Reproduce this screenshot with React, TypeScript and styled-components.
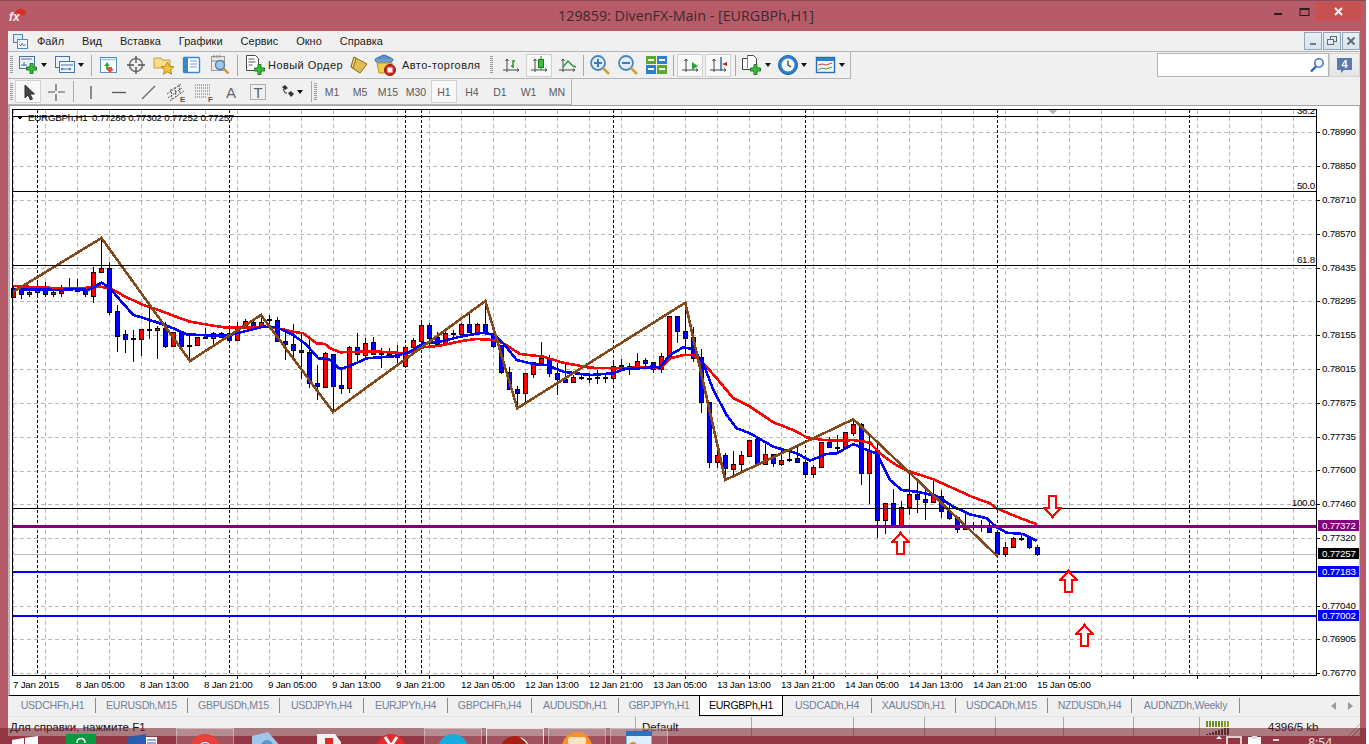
import React from 'react';
import styled, { createGlobalStyle } from 'styled-components';

const Global = createGlobalStyle`
  html, body { margin: 0; padding: 0; background: #fff; overflow: hidden; }
  #root { width: 1369px; height: 744px; }
`;

const FONT = '"Liberation Sans", Arial, sans-serif';
const ROSE = '#b85b68';

const Root = styled.div`
  position: relative; width: 1366px; height: 744px; background: ${ROSE};
  overflow: hidden; font-family: ${FONT}; display: flex; flex-direction: column;
`;
const TitleBar = styled.div`
  height: 31px; box-sizing: border-box; border-top: 1px solid #8f4853;
  display: flex; align-items: flex-start; padding-left: 9px; position: relative; flex: none;
`;
const Logo = styled.div` width: 18px; height: 16px; margin-top: 6px; `;
const Title = styled.div`
  flex: 1; text-align: center; font-family: "Open Sans", sans-serif; font-size: 14.3px; line-height: 29px;
  color: #3b2a2e; padding-left: 82px; margin-right: 4px;
`;
const WinControls = styled.div` display: flex; width: 94px; height: 20px; margin: 1px 5px 0 0; flex: none; align-items: flex-start; `;
const WinBtn = styled.div` width: 25px; height: 20px; display: flex; align-items: center; justify-content: center; `;
const CloseBtn = styled.div`
  width: 45px; height: 19px; margin-left: 0; background: #c75050; display: flex; align-items: center; justify-content: center;
`;
const Frame = styled.div`
  width: 1352px; margin-left: 8px; height: 705px; background: #f0f0f0; display: flex; flex-direction: column; flex: none;
`;
const MenuBar = styled.div`
  height: 21px; box-sizing: border-box; border-bottom: 1px solid #b4b4b4; display: flex; align-items: center;
  padding-left: 5px; flex: none;
`;
const MenuLogo = styled.div` width: 15px; height: 15px; margin-right: 9px; `;
const MenuItem = styled.div` font-size: 11px; color: #1c1c1c; margin-right: 18px; `;
const MdiGroup = styled.div` margin-left: auto; display: flex; gap: 1px; `;
const MdiBtn = styled.div`
  width: 18px; height: 18px; box-sizing: border-box; border: 1px solid #90a6b8;
  background: linear-gradient(#e9eff5, #d7e2ec); display: flex; align-items: center; justify-content: center;
`;
const Row = styled.div<{ $h: number }>` height: ${p => p.$h}px; display: flex; flex: none; `;
const Toolbar = styled.div<{ $w: number }>`
  width: ${p => p.$w}px; box-sizing: border-box; display: flex; align-items: center;
  border-bottom: 1px solid #b4b4b4; border-right: 1px solid #b4b4b4;
`;
const Grip = styled.div<{ $w: number }>`
  width: ${p => p.$w}px; height: 100%; flex: none; position: relative;
  &::before {
    content: ''; position: absolute; left: 2px; top: 4px; bottom: 4px; width: 3px;
    background: repeating-linear-gradient(to bottom, #9a9a9a 0 1px, transparent 1px 2px);
  }
`;
const Sep = styled.div<{ $w: number }>`
  width: ${p => p.$w}px; height: 21px; flex: none; display: flex; justify-content: center;
  &::before { content: ''; width: 1px; background: #a8a8a8; }
`;
const ToolBtn = styled.div<{ $w: number; $active?: boolean }>`
  width: ${p => p.$w - 2}px; margin: 0 1px; height: 23px; box-sizing: border-box; flex: none;
  display: flex; align-items: center; justify-content: center; gap: 2px;
  border: 1px solid ${p => (p.$active ? '#d0d0d0' : 'transparent')};
  background: ${p => (p.$active ? '#f8f8f8' : 'transparent')};
  font-size: 10.5px; color: #5a5a5a;
`;
const LabelBtn = styled.div<{ $w: number; $gap: number; $pad: number }>`
  width: ${p => p.$w}px; height: 23px; box-sizing: border-box; flex: none; padding-left: ${p => p.$pad}px;
  display: flex; align-items: center; gap: ${p => p.$gap}px;
`;
const BtnText = styled.span` font-size: 11px; letter-spacing: 0.45px; color: #222; white-space: nowrap; `;
const Caret = styled.div`
  width: 0; height: 0; border-left: 3.5px solid transparent; border-right: 3.5px solid transparent;
  border-top: 4px solid #111; flex: none;
`;
const SearchGroup = styled.div` margin-left: auto; display: flex; margin-top: 1px; height: 24px; `;
const SearchBox = styled.div`
  width: 172px; box-sizing: border-box; background: #fff; border: 1px solid #b4b4b4; display: flex;
  justify-content: flex-end; align-items: center; padding-right: 3px;
`;
const NoteBtn = styled.div`
  width: 31px; box-sizing: border-box; border: 1px solid #d4d4d4; background: linear-gradient(#f2f2f2, #e4e4e4);
  display: flex; align-items: center; justify-content: center; padding-top: 1px;
`;
const ChartBox = styled.div`
  height: 591px; flex: none; box-sizing: border-box; border-top: 1px solid #a0a0a0; border-left: 2px solid #b8b8b8;
  border-right: 1px solid #b8b8b8; border-bottom: 1px solid #000; background: #fff;
`;
const ChartSvg = styled.svg` display: block; `;
const AxisText = styled.text<{ $fill?: string }>`
  font-family: ${FONT}; font-size: 9.8px; letter-spacing: -0.25px; fill: ${p => p.$fill || '#000'};
`;
const FibText = styled(AxisText)` text-anchor: end; `;
const TabBar = styled.div`
  height: 20px; flex: none; display: flex; align-items: stretch; padding-left: 2px; position: relative; box-sizing: border-box;
`;
const Tab = styled.div<{ $w: number; $active?: boolean; $bare?: boolean }>`
  width: ${p => p.$w}px; flex: none; box-sizing: border-box; text-align: center; font-size: 10.6px; letter-spacing: -0.3px;
  white-space: nowrap; color: ${p => (p.$active ? '#000' : '#75809a')};
  height: ${p => (p.$active ? '20px' : '15px')}; margin-top: ${p => (p.$active ? '0' : '2px')};
  line-height: ${p => (p.$active ? '19px' : '15px')};
  background: ${p => (p.$active ? '#fff' : 'transparent')};
  border-left: ${p => (p.$active ? '1px solid #000' : 'none')};
  border-bottom: ${p => (p.$active ? '1px solid #000' : 'none')};
  border-right: ${p => (p.$active ? '1px solid #000' : p.$bare ? 'none' : '1px solid #8a8a8a')};
`;
const TabArrows = styled.div` margin-left: auto; display: flex; gap: 12px; align-items: center; margin-right: 7px; `;
const TabArrow = styled.div<{ $dir: 'l' | 'r' }>`
  width: 0; height: 0; border-top: 4px solid transparent; border-bottom: 4px solid transparent;
  ${p => (p.$dir === 'l' ? 'border-right: 5px solid #9a9a9a;' : 'border-left: 5px solid #9a9a9a;')}
`;
const StatusBar = styled.div`
  height: 20px; flex: none; display: flex; box-sizing: border-box; border-top: 1px solid #e4e4e4; padding-left: 2px; position: relative;
`;
const StatusCell = styled.div<{ $w: number; $noLine?: boolean; $pad?: number }>`
  width: ${p => p.$w}px; flex: none; box-sizing: border-box; font-size: 11.5px; color: #111; white-space: nowrap;
  padding: 4px 0 0 ${p => p.$pad ?? 6}px;
  border-right: ${p => (p.$noLine ? 'none' : '1px solid #a8a8a8')};
`;
const Resize = styled.div`
  position: absolute; right: 0; bottom: 0; width: 14px; height: 14px;
  background: repeating-linear-gradient(135deg, transparent 0 2px, #b0b0b0 2px 3px);
  clip-path: polygon(100% 0, 100% 100%, 0 100%);
`;
const Taskbar = styled.div`
  position: absolute; left: 0; top: 728px; width: 1366px; height: 16px; background: rgba(114, 25, 36, 0.55);
  display: flex; overflow: hidden;
`;
const TaskSlot = styled.div<{ $w: number; $active?: 0 | 1 | 2 }>`
  width: ${p => p.$w - 4}px; margin: 0 2px; height: 30px; box-sizing: border-box; flex: none; display: flex; justify-content: center;
  border: 1px solid ${p => (p.$active === 2 ? 'rgba(255,255,255,.75)' : p.$active === 1 ? 'rgba(255,255,255,.35)' : 'transparent')};
  background: ${p => (p.$active ? 'rgba(255,255,255,.14)' : 'transparent')};
`;
const TaskIcon = styled.svg<{ $top: number }>` margin-top: ${p => p.$top}px; flex: none; `;
const Tray = styled.div` margin-left: auto; display: flex; align-items: flex-start; padding-top: 8px; `;
const Clock = styled.div`
  font-family: "Open Sans", sans-serif; font-size: 12px; color: #eee; line-height: 12px; margin: 1px 34px 0 19px;
`;

/* ---------- small icons ---------- */
const Svg = styled.svg` display: block; flex: none; `;
const Ic: React.FC<{ children: React.ReactNode; w?: number; h?: number }> = ({ children, w = 22, h = 22 }) => (
  <Svg width={w} height={h} viewBox={`0 0 ${w} ${h}`}>{children}</Svg>
);
const Plus = ({ x, y }: { x: number; y: number }) => (
  <path transform={`translate(${x} ${y})`} d="M4 .5h3v3.5h3.5v3H7v3.5H4V7H.5V4H4z" fill="#3dbb3d" stroke="#1c7d22" />
);
const Axes = () => (
  <path d="M7 5v13M3 16h16M7 5l-1.5 2M7 5l1.5 2M19 16l-2-1.5M19 16l-2 1.5" stroke="#4a4a4a" fill="none" />
);

const IconNewChart = () => (
  <Ic><rect x="2.5" y="2.5" width="15" height="12" fill="#e9f2fb" stroke="#46749f" /><path d="M4 5h11M7 8v4M4 11h6" stroke="#46749f" /><Plus x={9} y={9} /></Ic>
);
const IconProfile = () => (
  <Ic><rect x="1.5" y="2.5" width="14" height="11" fill="#e9f2fb" stroke="#46749f" /><rect x="5.5" y="7.5" width="15" height="11" fill="#eef5fc" stroke="#46749f" /><path d="M7 11h12M9 14l-2 1 2 1M15 14l2 1-2 1M8 15h8" stroke="#46749f" fill="none" /></Ic>
);
const IconMarket = () => (
  <Ic><rect x="2.5" y="3.5" width="16" height="15" fill="#fff" stroke="#5a8fbf" /><rect x="3.5" y="4.5" width="14" height="2" fill="#a9cbe7" /><path d="M6 12l3-4 3 4h-2v3H8v-3z" fill="#32a84a" /><path d="M10 13h4v2h2l-4 4-4-4h2z" fill="#e0573d" /></Ic>
);
const IconCross = () => (
  <Ic><circle cx="11" cy="11" r="6.5" fill="none" stroke="#777" strokeWidth="1.6" /><path d="M11 2v7M11 13v7M2 11h7M13 11h7" stroke="#555" strokeWidth="1.4" /></Ic>
);
const IconFolderStar = () => (
  <Ic><path d="M1 4h7l2 2h7v8H1z" fill="#f7dd8c" stroke="#c79c3a" /><path d="M14.5 8l2 4.3 4.5.5-3.4 3 1 4.5-4.1-2.4-4.1 2.4 1-4.5-3.4-3 4.5-.5z" fill="#f1c232" stroke="#b58a1d" /></Ic>
);
const IconNav = () => (
  <Ic><rect x="2.5" y="3.5" width="16" height="15" rx="1" fill="#fff" stroke="#3c85c8" strokeWidth="1.4" /><rect x="3" y="4" width="4" height="14" fill="#3c85c8" /><path d="M9 7h7M9 10h7M9 13h7" stroke="#6a9fd0" /></Ic>
);
const IconJournal = () => (
  <Ic><rect x="2.5" y="2.5" width="13" height="14" fill="#e9e9e9" stroke="#9a9a9a" /><path d="M5 1v3M8 1v3M11 1v3M2 7h13" stroke="#8a8a8a" /><circle cx="11" cy="11" r="4.5" fill="#9fc9ec" stroke="#5a7fa8" strokeWidth="1.4" /><path d="M14.5 14.5l5 5" stroke="#c99a2b" strokeWidth="2.4" /></Ic>
);
const IconOrder = () => (
  <Ic><path d="M2.5 1.5h9l3 3v12h-12z" fill="#fff" stroke="#4a4a4a" /><path d="M4.5 5h6M4.5 8h7M4.5 11h4" stroke="#5a5a5a" /><Plus x={10} y={10} /></Ic>
);
const IconGold = () => (
  <Ic><path d="M5 3l13 7-7 9L2 13z" fill="#e0bd55" stroke="#8f6d16" /><path d="M5 3l-3 10 2 1 3-9z" fill="#f5dd93" stroke="#8f6d16" /><path d="M2 13l9 6 1 1-9-6z" fill="#a7811d" /></Ic>
);
const IconAuto = () => (
  <Ic><ellipse cx="10" cy="6" rx="9" ry="3.5" fill="#6f9fd0" stroke="#3b6ea3" /><path d="M5 5c0-5 10-5 10 0" fill="#5c90c6" stroke="#3b6ea3" /><path d="M3 9l15 0 1 10H5z" fill="#f2cd4d" stroke="#b9951f" /><circle cx="16" cy="16" r="5.5" fill="#d22828" stroke="#8f1414" /><rect x="13.5" y="13.5" width="5" height="5" fill="#fff" /></Ic>
);
const IconBars = () => (
  <Ic><Axes /><path d="M13 6v8M11 12h2M13 7h2" stroke="#1f9a2f" strokeWidth="1.5" fill="none" /></Ic>
);
const IconCandle = () => (
  <Ic><Axes /><path d="M13 2v14" stroke="#1c7d22" /><rect x="10.5" y="5.5" width="5" height="8" fill="#39c13c" stroke="#1c7d22" /></Ic>
);
const IconLine = () => (
  <Ic><Axes /><path d="M7 13l5-6 5 5 3 1" fill="none" stroke="#2f9a3a" strokeWidth="1.5" /></Ic>
);
const Zoom = ({ minus }: { minus?: boolean }) => (
  <Ic><circle cx="9" cy="9" r="7" fill="#dfeefa" stroke="#4c86b8" strokeWidth="1.8" /><path d="M5 9h8" stroke="#3f7db0" strokeWidth="2" />{!minus && <path d="M9 5v8" stroke="#3f7db0" strokeWidth="2" />}<path d="M14 14l6 6" stroke="#d3a52e" strokeWidth="2.6" /></Ic>
);
const IconTile = () => (
  <Ic><rect x="1" y="2" width="10" height="8" fill="#5aab2c" /><rect x="12" y="2" width="10" height="8" fill="#2f7fd0" /><rect x="1" y="11" width="10" height="9" fill="#2f7fd0" /><rect x="12" y="11" width="10" height="9" fill="#5aab2c" /><path d="M3 6h6M14 6h6M3 15h6M14 15h6" stroke="#fff" strokeWidth="2" /></Ic>
);
const IconShift = () => (
  <Ic><Axes /><path d="M13 8l6 4-6 4z" fill="#2ea53a" /></Ic>
);
const IconAuto2 = () => (
  <Ic><Axes /><path d="M14 3v14" stroke="#2a5fa8" strokeWidth="1.4" /><path d="M15 10l5-2v4z" fill="#b52a1e" /></Ic>
);
const IconTemplate = () => (
  <Ic><path d="M1.5 4.5h5v-3h6l3 3v11h-14z" fill="#fff" stroke="#444" /><path d="M6.5 1.5v13" stroke="#888" /><Plus x={9} y={10} /></Ic>
);
const IconClock = () => (
  <Ic><circle cx="11" cy="11" r="9.5" fill="#2a83d0" stroke="#185d9f" /><circle cx="11" cy="11" r="6.5" fill="#f7f7f2" /><path d="M11 6.5V11l3 2" stroke="#333" strokeWidth="1.2" fill="none" /></Ic>
);
const IconTerm = () => (
  <Ic><rect x="1.5" y="3.5" width="18" height="15" fill="#f6f6f2" stroke="#2a6fb6" strokeWidth="1.4" /><rect x="2" y="4" width="17" height="3" fill="#2a83d0" /><path d="M3 11l4-1 4 1 6-2" stroke="#c44" fill="none" /><path d="M3 16l4-2 4 1 6-2" stroke="#3a3" fill="none" /></Ic>
);
const IconPointer = () => (
  <Ic><path d="M8 4v13l3-3 2.500 5 2-1-2.500-5h4.500z" fill="#444" stroke="#333" strokeLinejoin="round" /></Ic>
);
const IconCrosshair = () => (
  <Ic><path d="M11 3v7M11 13v7M3 11h7M13 11h7" stroke="#555" strokeWidth="1.2" /></Ic>
);
const IconVLine = () => <Ic><path d="M11 5v13" stroke="#555" strokeWidth="1.3" /></Ic>;
const IconHLine = () => <Ic><path d="M4 11.500h14" stroke="#555" strokeWidth="1.3" /></Ic>;
const IconTrend = () => <Ic><path d="M5 18L18 5" stroke="#666" strokeWidth="1.3" /></Ic>;
const LetterTag = styled.text` font-family: ${FONT}; font-size: 8px; font-weight: bold; fill: #555; `;
const IconChannel = () => (
  <Ic><path d="M2 13L16 3M3 17L17 7M5 20L19 10M6 8l1 10M10 6l1 10M14 4l1 9" stroke="#555" strokeDasharray="2 1" fill="none" /><LetterTag x="15" y="21">E</LetterTag></Ic>
);
const IconFib = () => (
  <Ic><path d="M2 4h15M2 7h15M2 10h15M2 13h15M2 16h11" stroke="#666" strokeDasharray="1 1" /><LetterTag x="15" y="21">F</LetterTag></Ic>
);
const LetterA = styled.text` font-family: ${FONT}; font-size: 15px; fill: #666; text-anchor: middle; `;
const IconText = () => <Ic><LetterA x="11" y="17">A</LetterA></Ic>;
const IconLabel = () => (
  <Ic><rect x="3.500" y="3.500" width="15" height="15" fill="none" stroke="#666" strokeDasharray="1 1" /><LetterA x="11" y="17">T</LetterA></Ic>
);
const IconArrows = () => (
  <Svg width={16} height={16} viewBox="0 0 16 16"><path d="M3 3l3-2 3 3-3 2zM9 9l3-2 3 3-3 3z" fill="#333" /><path d="M4 5l2 4h2" stroke="#333" fill="none" /></Svg>
);

const LogoText = styled.text` font-family: ${FONT}; font-style: italic; font-weight: bold; font-size: 12px; fill: #f8ece8; `;
const FxLogo = () => (
  <Svg width={18} height={16} viewBox="0 0 18 16">
    <path d="M5 7C7 1 15 0 17 5c1 3-3 4-5 3S8 6 5 7z" fill="#d92f29" />
    <LogoText x="0" y="14">fx</LogoText>
  </Svg>
);
const MenuGlyph = () => (
  <Svg width={15} height={15} viewBox="0 0 15 15">
    <rect x="0.500" y="0.500" width="9" height="8" fill="#dcebf9" stroke="#4a89c4" />
    <rect x="4.500" y="5.500" width="10" height="9" fill="#f2f8fe" stroke="#4a89c4" />
    <path d="M6 10l2 2 1-3 2 3 2-2" stroke="#4a89c4" fill="none" />
  </Svg>
);

/* ---------- chart data (pixel rows read from the picture) ---------- */
type C = ['r' | 'b' | 'k', number, number, number, number];
const Z7: C[] = [
  ['r',205,230,200,232],['b',207,222,200,236],['r',217,223,205,230],['r',197,217,185,232],['b',197,223,185,232],
  ['r',217,223,200,230],['r',213,218,195,232],['b',200,210,175,212],['b',200,212,178,215],['b',207,222,200,230],
  ['r',157,227,140,248],['r',145,157,55,145],['b',145,275,125,285],['b',273,347,255,395],['b',343,356,330,398],
  ['k',355,358,330,425],['r',328,358,328,408],['k',328,331,265,357],['r',325,331,318,416],['b',325,377,305,385],
  ['r',335,377,335,380],['b',335,377,335,380],['k',376,377,345,420],['r',352,376,350,378],['k',352,355,325,358],
  ['r',338,355,335,375],['b',338,350,335,352],['b',340,360,320,362],['r',320,360,305,363],['r',302,320,298,322],
  ['b',305,318,300,320],['r',305,320,295,322],['k',298,301,285,320],['b',299,364,290,366],['b',364,372,340,420],
  ['b',373,390,313,412],['b',391,397,340,478],['b',395,490,360,505],['b',490,498,435,540],['r',400,502,395,503],
];
const Z8: C[] = [
  ['b',222,317,222,395],['b',315,325,265,342],['r',202,325,197,338],['b',202,222,158,248],['r',190,226,175,240],
  ['b',187,222,170,225],['k',220,223,205,265],['k',220,222,205,232],['b',222,232,195,262],['r',202,257,195,258],
  ['r',181,200,175,205],['r',136,182,128,200],['b',136,175,128,195],['b',172,192,155,200],['r',160,190,155,195],
  ['k',160,163,150,172],['r',133,163,130,165],['b',133,155,100,160],['r',133,155,130,160],['b',133,160,70,165],
  ['b',160,197,160,205],['b',195,277,195,282],['b',277,328,260,330],['b',328,340,318,380],['r',280,340,280,370],
  ['r',247,283,245,295],['r',235,250,187,255],['b',235,280,225,292],['b',280,296,250,345],['b',296,306,250,310],
  ['r',290,307,285,310],['k',290,293,280,300],['k',293,296,280,310],['k',291,293,270,312],['k',291,295,280,308],
  ['r',257,295,245,300],['k',256,259,238,270],['k',258,262,250,285],['r',242,262,218,265],['b',240,250,235,265],
];
const Z9: C[] = [
  ['b',217,237,217,250],['r',198,237,190,250],['r',79,198,79,200],['b',79,122,78,158],['b',122,143,40,192],
  ['b',142,203,112,215],['b',202,335,178,368],['b',337,517,337,533],['r',495,517,470,535],['b',496,533,490,560],
  ['r',523,536,483,565],['r',496,523,483,542],['r',450,497,450,500],['b',448,522,440,525],['r',493,522,460,525],
  ['b',493,520,493,530],['r',511,521,480,528],['k',508,510,490,515],['b',505,517,470,520],['b',517,553,510,565],
  ['r',532,553,525,565],['r',457,532,455,535],['b',457,472,440,475],['k',470,473,435,490],
];
const Z10: C[] = [
  ['r',67,110,65,115],['r',43,70,33,77],['b',43,190,40,225],['r',120,190,75,282],['b',120,330,95,385],
  ['r',278,330,278,372],['b',278,345,238,350],['r',290,345,272,350],['r',253,290,190,315],['b',253,268,215,308],
  ['b',268,275,240,330],['r',255,277,210,280],['b',257,302,240,325],['b',304,323,280,330],['b',322,358,320,368],
  ['r',348,356,305,358],['k',347,348,335,360],['k',345,346,330,365],['b',347,367,335,368],['b',367,433,365,435],
  ['r',410,433,395,440],['r',385,410,380,412],['k',384,385,375,392],['b',382,410,378,416],['b',412,433,405,438],
];
const SEGS: [C[], number, number][] = [[Z7, 0, 220], [Z8, 40, 280], [Z9, 80, 290], [Z10, 104, 410]];
const CANDLES = SEGS.flatMap(([arr, i0, oy]) =>
  arr.map(([c, bt, bb, wt, wb], k) => ({
    x: 13.5 + 8 * (i0 + k), c,
    bt: Math.round(oy + bt / 3), bb: Math.round(oy + bb / 3),
    wt: Math.round(oy + wt / 3), wb: Math.round(oy + wb / 3),
  })),
);
const zp = (ox: number, oy: number, pts: number[][]) => pts.map(([x, y]) => `${(ox + x / 3).toFixed(1)},${(oy + y / 3).toFixed(1)}`).join(' ');
const RED_MA = [
  zp(0, 220, [[38,198],[180,205],[240,205],[300,200],[330,205],[380,232],[430,255],[470,268],[520,287],[570,305],[640,317],[680,323],[760,322],[810,320],[880,335],[910,340],[950,370],[975,372]]),
  zp(330, 280, [[0,205],[30,217],[100,215],[150,215],[230,220],[280,202],[330,197],[400,182],[440,177],[490,180],[520,190],[570,222],[640,230],[700,248],[780,263],[850,265],[920,263]]),
  zp(650, 290, [[0,233],[30,235],[60,205],[100,195],[130,195],[165,225],[200,265],[250,325],[300,350],[330,370],[370,397],[430,420],[470,442],[520,450],[570,452],[610,450],[660,458],[690,490],[720,513]]),
  zp(840, 410, [[180,172],[210,185],[280,208],[340,235],[400,262],[450,280],[470,295],[530,320],[590,343]]),
].join(' ');
const BLUE_MA = [
  zp(0, 220, [[38,207],[180,210],[230,207],[265,210],[305,188],[330,205],[360,240],[400,285],[440,297],[480,310],[520,325],[560,343],[640,347],[690,345],[730,335],[790,320],[830,322],[880,345],[920,375],[955,415],[985,418]]),
  zp(330, 280, [[0,240],[30,267],[60,258],[110,235],[200,228],[240,215],[280,190],[330,185],[400,168],[460,158],[495,165],[520,190],[560,240],[610,252],[650,255],[700,275],[780,285],[850,280],[880,268],[970,262]]),
  zp(650, 290, [[0,230],[30,232],[60,195],[100,172],[130,178],[160,220],[190,300],[230,375],[260,415],[300,430],[370,470],[440,490],[480,512],[530,492],[560,490],[610,462],[650,480],[680,490],[720,570]]),
  zp(840, 410, [[185,240],[230,245],[290,258],[340,290],[390,313],[440,325],[470,352],[500,368],[550,372],[590,393]]),
].join(' ');
const ZIGZAG = '13,292 101.5,238 190,361 261,315 333,412 485.3,301 517.3,408.3 685.3,302.7 725.3,480 853.3,419.3 997.3,556';
const GRID_Y = [132,166,200,234,268,301,335,369,403,437,471,504,538,572,606,639,673];
const PRICES: [number, string][] = [
  [132,'0.78990'],[166,'0.78850'],[200,'0.78710'],[234,'0.78570'],[268,'0.78435'],[301,'0.78295'],[335,'0.78155'],
  [369,'0.78015'],[403,'0.77875'],[437,'0.77735'],[470,'0.77600'],[504,'0.77460'],[538,'0.77320'],[606,'0.77040'],[639,'0.76905'],[673,'0.76770'],
];
const DARK_V = [37.5, 229.5, 405.5, 421.5, 613.5, 805.5, 997.5, 1189.5];
const TIMES = ['8 Jan 05:00','8 Jan 13:00','8 Jan 21:00','9 Jan 05:00','9 Jan 13:00','9 Jan 21:00','12 Jan 05:00','12 Jan 13:00','12 Jan 21:00','13 Jan 05:00','13 Jan 13:00','13 Jan 21:00','14 Jan 05:00','14 Jan 13:00','14 Jan 21:00','15 Jan 05:00'];
const TAGS: [number, string, string][] = [[520,'0.77372','#800080'],[548,'0.77257','#000'],[566,'0.77183','#00f'],[610,'0.77002','#00f']];
const LEVELS: [number, string][] = [[114,'38.2'],[189,'50.0'],[263,'61.8'],[506,'100.0']];

const UpArrow = ({ x, y }: { x: number; y: number }) => (
  <polygon transform={`translate(${x} ${y})`} points="8.500,1 16.500,10 12,10 12,22 5,22 5,10 0.500,10" fill="#fff" stroke="#ff0000" strokeWidth="2.200" />
);
const DownArrow = ({ x, y }: { x: number; y: number }) => (
  <polygon transform={`translate(${x} ${y})`} points="5,1 12,1 12,13 16.500,13 8.500,22 0.500,13 5,13" fill="#fff" stroke="#ff0000" strokeWidth="2.200" />
);

const Chart = () => (
  <ChartSvg width={1349} height={589} viewBox="10 106 1349 589" shapeRendering="crispEdges">
    {GRID_Y.map(y => <line key={y} x1={13} x2={1316} y1={y + 0.5} y2={y + 0.5} stroke="#b8b8b8" strokeDasharray="4 3" />)}
    {Array.from({ length: 41 }, (_, k) => 13.5 + 32 * k).map(x => <line key={x} x1={x} x2={x} y1={110} y2={675} stroke="#b8b8b8" strokeDasharray="4 3" />)}
    {DARK_V.map(x => <line key={x} x1={x} x2={x} y1={110} y2={675} stroke="#000" strokeDasharray="3 2" />)}
    <line x1={13} x2={1316} y1={554.5} y2={554.5} stroke="#bcbcbc" />
    {CANDLES.map((d, k) => (
      <g key={k}>
        <line x1={d.x} x2={d.x} y1={d.wt} y2={d.wb} stroke="#000" />
        <rect x={d.x - 2} y={d.bt + 0.5} width={4} height={Math.max(d.bb - d.bt, 1)} fill={d.c === 'r' ? '#f00' : d.c === 'b' ? '#00f' : '#000'} stroke="#000" />
      </g>
    ))}
    <polyline points={RED_MA} fill="none" stroke="#f00" strokeWidth="2.600" />
    <polyline points={BLUE_MA} fill="none" stroke="#00f" strokeWidth="2.600" />
    <polyline points={ZIGZAG} fill="none" stroke="#84491a" strokeWidth="2.600" />
    {LEVELS.map(([y, t]) => <FibText key={t} x={1315} y={y}>{t}</FibText>)}
    <rect x={1290} y={106} width={30} height={3} fill="#fff" />
    <AxisText x={28} y={120.5}>EURGBPh,H1</AxisText>
    <AxisText x={92} y={120.5}>0.77286 0.77302 0.77252 0.77257</AxisText>
    <path d="M17 116h6l-3 4z" fill="#000" />
    {[116.5, 191.5, 265.5, 508.5].map(y => <line key={y} x1={13} x2={1316} y1={y} y2={y} stroke="#000" />)}
    <line x1={13} x2={1316} y1={526} y2={526} stroke="#800080" strokeWidth="3" />
    <line x1={13} x2={1316} y1={572} y2={572} stroke="#00f" strokeWidth="2" />
    <line x1={13} x2={1316} y1={616} y2={616} stroke="#00f" strokeWidth="2" />
    <rect x={12.5} y={109.5} width={1304} height={566} fill="none" stroke="#000" />
    <path d="M1048 109.500h10l-5 5z" fill="#b8b8b8" />
    {PRICES.map(([y, t]) => (
      <g key={t}>
        <line x1={1317} x2={1320} y1={y + 0.5} y2={y + 0.5} stroke="#000" />
        <AxisText x={1322} y={y + 2.5}>{t}</AxisText>
      </g>
    ))}
    {TAGS.map(([y, t, c]) => (
      <g key={t}>
        <rect x={1318} y={y} width={41} height={11} fill={c} />
        <AxisText x={1322} y={y + 8.5} $fill="#fff">{t}</AxisText>
      </g>
    ))}
    {Array.from({ length: 40 }, (_, k) => 45.5 + 32 * k).map((x, k) => (
      <line key={x} x1={x} x2={x} y1={676} y2={k % 2 ? 677 : 679} stroke="#000" />
    ))}
    <AxisText x={13} y={688}>7 Jan 2015</AxisText>
    {TIMES.map((t, k) => <AxisText key={t} x={(k < 6 ? 76 : 77) + 64 * k} y={688}>{t}</AxisText>)}
    <UpArrow x={892} y={532} />
    <DownArrow x={1044} y={495} />
    <UpArrow x={1060} y={570} />
    <UpArrow x={1076} y={624} />
  </ChartSvg>
);

const TABS: [string, number][] = [
  ['USDCHFh,H1',86],['EURUSDh,M15',92],['GBPUSDh,M15',92],['USDJPYh,H4',84],['EURJPYh,H4',84],['GBPCHFh,H4',84],
  ['AUDUSDh,H1',87],['GBPJPYh,H1',80],['EURGBPh,H1',84],['USDCADh,H4',89],['XAUUSDh,H1',84],['USDCADh,M15',92],
  ['NZDUSDh,H4',84],['AUDNZDh,Weekly',108],
];
const MENUS = ['Файл', 'Вид', 'Вставка', 'Графики', 'Сервис', 'Окно', 'Справка'];
const PERIODS: [string, number, boolean?][] = [['M1',28],['M5',28],['M15',28],['M30',28],['H1',28,true],['H4',28],['D1',28],['W1',29],['MN',28]];
const STATUS: [string, number, number?][] = [['Для справки, нажмите F1',626,0],['Default',116],['',102],['',71],['',71],['',68],['',70],['',66]];

export default function App() {
  return (
    <Root>
      <Global />
      <TitleBar>
        <Logo><FxLogo /></Logo>
        <Title>129859: DivenFX-Main - [EURGBPh,H1]</Title>
        <WinControls>
          <WinBtn><Svg width={10} height={10} viewBox="0 0 10 10"><rect x="0" y="6" width="8" height="2" fill="#2b1a1e" /></Svg></WinBtn>
          <WinBtn><Svg width={11} height={10} viewBox="0 0 11 10"><rect x="1" y="1.500" width="9" height="7" fill="none" stroke="#2b1a1e" /><rect x="1" y="1" width="9" height="2" fill="#2b1a1e" /></Svg></WinBtn>
          <CloseBtn><Svg width={9} height={9} viewBox="0 0 9 9"><path d="M1 1l7 7M8 1L1 8" stroke="#fff" strokeWidth="1.800" /></Svg></CloseBtn>
        </WinControls>
      </TitleBar>
      <Frame>
        <MenuBar>
          <MenuLogo><MenuGlyph /></MenuLogo>
          {MENUS.map(m => <MenuItem key={m}>{m}</MenuItem>)}
          <MdiGroup>
            <MdiBtn><Svg width={10} height={10} viewBox="0 0 10 10"><rect x="2" y="7" width="6" height="2" fill="#6a7d8c" /></Svg></MdiBtn>
            <MdiBtn><Svg width={10} height={10} viewBox="0 0 10 10"><rect x="3.500" y="0.500" width="6" height="5" fill="none" stroke="#5e6d79" /><rect x="0.500" y="3.500" width="6" height="5" fill="#e4ebf2" stroke="#5e6d79" /></Svg></MdiBtn>
            <MdiBtn><Svg width={10} height={10} viewBox="0 0 10 10"><path d="M1.500 1.500l7 7M8.500 1.500l-7 7" stroke="#5e6d79" strokeWidth="2" /></Svg></MdiBtn>
          </MdiGroup>
        </MenuBar>
        <Row $h={27}>
          <Toolbar $w={843}>
            <Grip $w={6} />
            <ToolBtn $w={36}><IconNewChart /><Caret /></ToolBtn>
            <ToolBtn $w={38}><IconProfile /><Caret /></ToolBtn>
            <Sep $w={7} />
            <ToolBtn $w={27}><IconMarket /></ToolBtn>
            <ToolBtn $w={28}><IconCross /></ToolBtn>
            <ToolBtn $w={28}><IconFolderStar /></ToolBtn>
            <ToolBtn $w={28}><IconNav /></ToolBtn>
            <ToolBtn $w={28}><IconJournal /></ToolBtn>
            <Sep $w={7} />
            <LabelBtn $w={105} $gap={2} $pad={3}><IconOrder /><BtnText>Новый Ордер</BtnText></LabelBtn>
            <ToolBtn $w={28}><IconGold /></ToolBtn>
            <LabelBtn $w={114} $gap={6} $pad={0}><IconAuto /><BtnText>Авто-торговля</BtnText></LabelBtn>
            <Grip $w={9} />
            <ToolBtn $w={28}><IconBars /></ToolBtn>
            <ToolBtn $w={28} $active><IconCandle /></ToolBtn>
            <ToolBtn $w={28}><IconLine /></ToolBtn>
            <Sep $w={5} />
            <ToolBtn $w={28}><Zoom /></ToolBtn>
            <ToolBtn $w={28}><Zoom minus /></ToolBtn>
            <ToolBtn $w={28}><IconTile /></ToolBtn>
            <Sep $w={6} />
            <ToolBtn $w={28} $active><IconShift /></ToolBtn>
            <ToolBtn $w={28} $active><IconAuto2 /></ToolBtn>
            <Sep $w={6} />
            <ToolBtn $w={35}><IconTemplate /><Caret /></ToolBtn>
            <ToolBtn $w={37}><IconClock /><Caret /></ToolBtn>
            <ToolBtn $w={40}><IconTerm /><Caret /></ToolBtn>
          </Toolbar>
          <SearchGroup>
            <SearchBox>
              <Svg width={16} height={16} viewBox="0 0 16 16"><circle cx="10" cy="6" r="4.200" fill="#fff" stroke="#3f78c8" strokeWidth="1.600" /><path d="M7 9.500l-5 5" stroke="#2f62b0" strokeWidth="2.400" /></Svg>
            </SearchBox>
            <NoteBtn>
              <Svg width={17} height={17} viewBox="0 0 17 17">
                <path d="M1 1h15v12H8l-3 3v-3H1z" fill="#5b7bb0" />
                <text x="8.500" y="11" fontFamily={FONT} fontSize="11" fontWeight="bold" fill="#fff" textAnchor="middle">4</text>
              </Svg>
            </NoteBtn>
          </SearchGroup>
        </Row>
        <Row $h={26}>
          <Toolbar $w={564}>
            <Grip $w={6} />
            <ToolBtn $w={28} $active><IconPointer /></ToolBtn>
            <ToolBtn $w={28}><IconCrosshair /></ToolBtn>
            <Sep $w={6} />
            <ToolBtn $w={29}><IconVLine /></ToolBtn>
            <ToolBtn $w={28}><IconHLine /></ToolBtn>
            <ToolBtn $w={29}><IconTrend /></ToolBtn>
            <ToolBtn $w={28}><IconChannel /></ToolBtn>
            <ToolBtn $w={28}><IconFib /></ToolBtn>
            <ToolBtn $w={26}><IconText /></ToolBtn>
            <ToolBtn $w={28}><IconLabel /></ToolBtn>
            <ToolBtn $w={38}><IconArrows /><Caret /></ToolBtn>
            <Sep $w={2} />
            <Grip $w={6} />
            {PERIODS.map(([t, w, a]) => <ToolBtn key={t} $w={w} $active={a}>{t}</ToolBtn>)}
          </Toolbar>
        </Row>
        <ChartBox><Chart /></ChartBox>
        <TabBar>
          {TABS.map(([t, w], k) => <Tab key={t} $w={w} $active={t === 'EURGBPh,H1'} $bare={k === 7}>{t}</Tab>)}
          <TabArrows><TabArrow $dir="l" /><TabArrow $dir="r" /></TabArrows>
        </TabBar>
        <StatusBar>
          {STATUS.map(([t, w, pad], k) => <StatusCell key={k} $w={w} $pad={pad}>{t}</StatusCell>)}
          <StatusCell $w={62} $noLine>
            <Svg width={24} height={14} viewBox="0 0 24 14">
              {Array.from({ length: 8 }, (_, k) => <rect key={k} x={k * 3} y={0} width={2} height={6} fill={k < 6 ? '#6f8f1f' : '#8aa52b'} />)}
              {Array.from({ length: 8 }, (_, k) => <rect key={k} x={k * 3} y={Math.max(7, 13 - k)} width={2} height={14} fill="#444" />)}
            </Svg>
          </StatusCell>
          <StatusCell $w={100} $noLine>4396/5 kb</StatusCell>
          <Resize />
        </StatusBar>
      </Frame>
      <Taskbar>
        <TaskSlot $w={50}>
          <TaskIcon $top={7} width={26} height={20} viewBox="0 0 26 20"><path d="M0 4l12-2v9H0zM13 1.800L26 0v11H13z" fill="#fff" /></TaskIcon>
        </TaskSlot>
        <TaskSlot $w={62}>
          <TaskIcon $top={5} width={30} height={20} viewBox="0 0 30 20"><rect width="30" height="20" fill="#0a9a3d" /><path d="M11 9c0-6 8-6 8 0" stroke="#fff" strokeWidth="1.500" fill="none" /></TaskIcon>
        </TaskSlot>
        <TaskSlot $w={62}>
          <TaskIcon $top={5} width={30} height={20} viewBox="0 0 30 20"><path d="M0 3l18-3v20H0z" fill="#2a5db0" /><rect x="18" y="3" width="11" height="17" fill="#fff" /><path d="M19 6h9M19 9h9" stroke="#2a5db0" /></TaskIcon>
        </TaskSlot>
        <TaskSlot $w={62} $active={1}>
          <TaskIcon $top={5} width={30} height={30} viewBox="0 0 30 30"><circle cx="15" cy="15" r="15" fill="#e8403a" /><path d="M15 15L30 15A15 15 0 0 1 8 28z" fill="#f6c927" /><path d="M15 15L8 28A15 15 0 0 1 0 15z" fill="#3aa84a" /><circle cx="15" cy="15" r="6.500" fill="#3b83e0" stroke="#fff" /></TaskIcon>
        </TaskSlot>
        <TaskSlot $w={62}>
          <TaskIcon $top={3} width={30} height={20} viewBox="0 0 30 20"><path d="M0 4l16-4 14 16-8 4H0z" fill="#9fc7ea" /><circle cx="15" cy="14" r="6" fill="#5a94cf" /></TaskIcon>
        </TaskSlot>
        <TaskSlot $w={62}>
          <TaskIcon $top={5} width={30} height={20} viewBox="0 0 30 20"><path d="M3 0h18l6 8v12H3z" fill="#f2f2f2" /><rect x="11" y="4" width="8" height="14" fill="#e02a20" /></TaskIcon>
        </TaskSlot>
        <TaskSlot $w={62}>
          <TaskIcon $top={5} width={30} height={30} viewBox="0 0 30 30"><circle cx="15" cy="15" r="15" fill="#e52a2a" /><path d="M9 3l6 9 6-9" stroke="#fff" strokeWidth="3" fill="none" /></TaskIcon>
        </TaskSlot>
        <TaskSlot $w={62} $active={1}>
          <TaskIcon $top={5} width={30} height={30} viewBox="0 0 30 30"><circle cx="15" cy="15" r="15" fill="#16aee0" /></TaskIcon>
        </TaskSlot>
        <TaskSlot $w={62} $active={2}>
          <TaskIcon $top={6} width={32} height={30} viewBox="0 0 32 30"><circle cx="16" cy="16" r="15" fill="#a81f14" /><path d="M20 2c6 1 9 5 10 10-4-6-7-8-10-10z" fill="#f1f1f1" /></TaskIcon>
        </TaskSlot>
        <TaskSlot $w={62} $active={1}>
          <TaskIcon $top={3} width={30} height={30} viewBox="0 0 30 30"><circle cx="15" cy="15" r="15" fill="#f7912a" /><rect x="6" y="5" width="18" height="8" rx="3" fill="#fbe3c0" /></TaskIcon>
        </TaskSlot>
        <TaskSlot $w={62} $active={1}>
          <TaskIcon $top={2} width={26} height={24} viewBox="0 0 26 24"><rect width="26" height="24" fill="#ddeeff" stroke="#2a72c0" /><rect width="26" height="5" fill="#2a72c0" /><circle cx="7" cy="15" r="4" fill="#d98a2b" /></TaskIcon>
        </TaskSlot>
        <Tray>
          <Svg width={12} height={8} viewBox="0 0 12 8"><path d="M3 3l3-3 3 3z" fill="#fff" /></Svg>
          <Svg width={18} height={8} viewBox="0 0 18 8"><rect x="2" y="1" width="14" height="8" fill="none" stroke="#fff" strokeWidth="1.500" /></Svg>
          <Svg width={24} height={8} viewBox="0 0 24 8"><rect x="5" y="1" width="13" height="8" fill="#fff" /><rect x="9" y="0" width="5" height="3" fill="#ddd" /></Svg>
          <Svg width={22} height={8} viewBox="0 0 22 8"><rect x="6" y="3" width="6" height="2" fill="#ddd" /></Svg>
          <Clock>8:54</Clock>
        </Tray>
      </Taskbar>
    </Root>
  );
}
